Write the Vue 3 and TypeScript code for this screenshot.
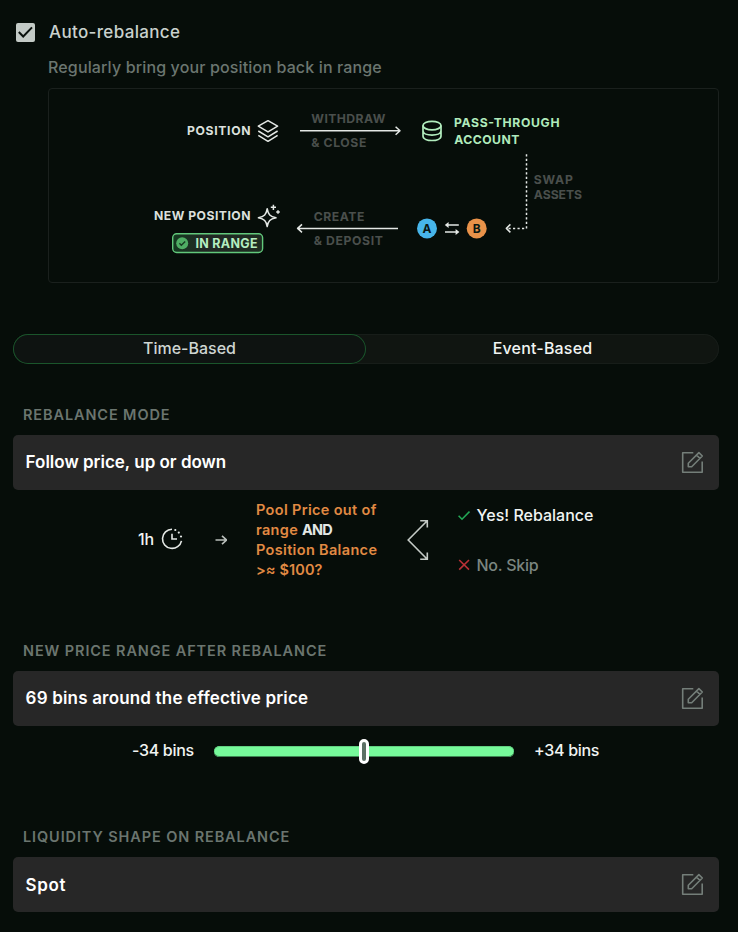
<script setup lang="ts">
import { ref } from 'vue'

type Mode = 'time' | 'event'

const enabled = ref(true)
const mode = ref<Mode>('time')
const tabs: { id: Mode; label: string }[] = [
  { id: 'time', label: 'Time-Based' },
  { id: 'event', label: 'Event-Based' },
]
</script>

<template>
  <main class="panel">
    <header class="head">
      <button class="checkbox" role="checkbox" :aria-checked="enabled" @click="enabled = !enabled">
        <svg v-if="enabled" viewBox="0 0 19 19" width="19" height="19">
          <path d="M2.8 9 7.2 13.5 16 4.4" fill="none" stroke="#0a110d" stroke-width="2" />
        </svg>
      </button>
      <h1 class="title">Auto-rebalance</h1>
    </header>
    <p class="subtitle">Regularly bring your position back in range</p>

    <section class="diagram">
      <svg viewBox="49 89 669 193" width="669" height="193">
        <defs>
          <linearGradient id="badge" x1="0" x2="1" y1="0" y2="0">
            <stop offset="0" stop-color="#143a20" />
            <stop offset="0.35" stop-color="#222724" />
            <stop offset="1" stop-color="#1d2c21" />
          </linearGradient>
        </defs>

        <g class="caps light">
          <text x="187" y="135.1" textLength="63.5">POSITION</text>
          <text x="154" y="220.3" textLength="96.5">NEW POSITION</text>
        </g>
        <g class="caps mint">
          <text x="454" y="126.6" textLength="105.5">PASS-THROUGH</text>
          <text x="454.3" y="144" textLength="65">ACCOUNT</text>
        </g>
        <g class="caps dim">
          <text x="311.3" y="123.3" textLength="74">WITHDRAW</text>
          <text x="311.3" y="147.3" textLength="55">&amp; CLOSE</text>
          <text x="313.8" y="221" textLength="50.5">CREATE</text>
          <text x="313.8" y="244.5" textLength="69">&amp; DEPOSIT</text>
          <text x="533.8" y="184.2" textLength="39">SWAP</text>
          <text x="533.8" y="199" textLength="48.3">ASSETS</text>
        </g>

        <g class="line">
          <!-- stacked layers -->
          <path d="M268 120.7 277.6 126.2 268 131.9 258.3 126.2Z" />
          <path d="M258.3 131 268 136.8 277.6 131M258.3 135.4 268 141.3 277.6 135.4" />
          <!-- sparkles -->
          <path d="M267.2 208.7C268.2 214.6 270 216.6 276 217.8 270 219 268.2 221 267.2 226.6 266.2 221 264.4 219 258.4 217.8 264.4 216.6 266.2 214.6 267.2 208.7Z" />
          <path d="M273.4 204.7V209.9M270.8 207.3H276M278 210.2V213.8M276.2 212H279.8" />
          <!-- flow arrows -->
          <path d="M300 130.7H400M395.6 126.7 400 130.7 395.6 134.7" />
          <path d="M398 228.4H297.6M302 224.4 297.6 228.4 302 232.4" />
          <path d="M510.4 224.4 506.4 228.4 510.4 232.4" />
          <path d="M526.5 154.2V228.4H508" stroke-dasharray="2.2 2.3" />
          <!-- swap -->
          <path d="M446 225H458.8M445 232H458" />
        </g>
        <path d="M444.8 225 448.6 222V228ZM459.4 232 455.6 229V235Z" fill="#e4e8e5" />

        <g class="line mint-line">
          <ellipse cx="432" cy="125.6" rx="9" ry="4.3" />
          <path d="M423 125.6V136C423 142 441 142 441 136V125.6M423 130.8C423 136.6 441 136.6 441 130.8" />
        </g>

        <rect x="172.7" y="233.7" width="89.9" height="18.8" rx="4" fill="url(#badge)" stroke="#62c87b" stroke-width="1.4" />
        <circle cx="182.2" cy="243.2" r="6" fill="#4fae64" />
        <path d="M179.4 243.3 181.3 245.2 185.2 241.4" fill="none" stroke="#163c21" stroke-width="1.4" />
        <text class="range" x="195.5" y="247.7" textLength="62">IN RANGE</text>

        <circle cx="427" cy="228.4" r="10" fill="#47b5ea" />
        <circle cx="476.7" cy="228.4" r="10" fill="#e99249" />
        <text class="token" x="427" y="232.8">A</text>
        <text class="token" x="476.7" y="232.8">B</text>
      </svg>
    </section>

    <nav class="tabs">
      <button
        v-for="t in tabs"
        :key="t.id"
        class="tab"
        :class="[t.id, { active: mode === t.id }]"
        @click="mode = t.id"
      >{{ t.label }}</button>
    </nav>

    <section class="group mode">
      <h2 class="label">REBALANCE MODE</h2>
      <div class="field">
        <span>Follow price, up or down</span>
        <svg class="edit" viewBox="0 0 24 24" width="24" height="24">
          <path d="M13.3 2.8H2.7V22.3H22.2V11.5" /><path d="M8.3 13.2 18.9 2.6 22.3 6 11.7 16.7H8.3ZM16.5 5 19.9 8.4" />
        </svg>
      </div>
      <div class="flow">
        <div class="interval">
          <span>1h</span>
          <svg viewBox="0 0 22 22" width="22" height="22">
            <path d="M11 1.2A9.6 9.6 0 1 0 20.5 12.8M11 5.8V11H16" />
            <g class="dots">
              <circle cx="14.3" cy="2" r="1.1" /><circle cx="17.8" cy="4.6" r="1.1" /><circle cx="20" cy="8.5" r="1.1" />
            </g>
          </svg>
        </div>
        <svg class="step" viewBox="0 0 12 10" width="12" height="10"><path d="M.5 5H11.5M7 .8 11.5 5 7 9.2" /></svg>
        <p class="condition">
          <span>Pool Price out of</span>
          <span>range <b>AND</b></span>
          <span>Position Balance</span>
          <span class="amount">&gt;≈ $100?</span>
        </p>
        <svg class="fork" viewBox="0 0 22 42" width="22" height="42">
          <path d="M20 2 1.2 21 20 40M13.2 1.7H20.3V8.5M13.2 40.3H20.3V33.5" />
        </svg>
        <div class="outcomes">
          <div class="outcome">
            <svg viewBox="0 0 12 12" width="12" height="12"><path d="M.6 6.8 4 10.2 11.5 2.5" stroke="#23a856" /></svg>
            <span>Yes! Rebalance</span>
          </div>
          <div class="outcome no">
            <svg viewBox="0 0 12 12" width="12" height="12"><path d="M1.2 1 11 10.6M11 1 1.2 10.6" stroke="#b93036" /></svg>
            <span>No. Skip</span>
          </div>
        </div>
      </div>
    </section>

    <section class="group price">
      <h2 class="label">NEW PRICE RANGE AFTER REBALANCE</h2>
      <div class="field wide">
        <span>69 bins around the effective price</span>
        <svg class="edit" viewBox="0 0 24 24" width="24" height="24">
          <path d="M13.3 2.8H2.7V22.3H22.2V11.5" /><path d="M8.3 13.2 18.9 2.6 22.3 6 11.7 16.7H8.3ZM16.5 5 19.9 8.4" />
        </svg>
      </div>
      <div class="slider">
        <span class="low">-34 bins</span>
        <div class="track"><i class="thumb"></i></div>
        <span>+34 bins</span>
      </div>
    </section>

    <section class="group">
      <h2 class="label">LIQUIDITY SHAPE ON REBALANCE</h2>
      <div class="field spot">
        <span>Spot</span>
        <svg class="edit" viewBox="0 0 24 24" width="24" height="24">
          <path d="M13.3 2.8H2.7V22.3H22.2V11.5" /><path d="M8.3 13.2 18.9 2.6 22.3 6 11.7 16.7H8.3ZM16.5 5 19.9 8.4" />
        </svg>
      </div>
    </section>
  </main>
</template>

<style>
body {
  background: #060d09;
}
</style>

<style scoped>
.panel {
  box-sizing: border-box;
  height: 932px;
  padding: 20px 19px 0 13px;
  background: #060d09;
  color: #f1f4f2;
  font: 500 16px/20px Inter, sans-serif;
}
h1, h2, p { margin: 0; }
button { border: 0; padding: 0; font: inherit; color: inherit; }
svg { display: block; flex: none; }
.head {
  display: flex;
  align-items: center;
  height: 24px;
  gap: 14px;
  padding-left: 3px;
}
.checkbox {
  width: 19px;
  height: 19px;
  margin-top: 1px;
  border-radius: 2px;
  background: #c3cac6;
}
.title {
  font-size: 17px;
  font-weight: 550;
  letter-spacing: 0.34px;
  color: #c9d1cd;
}
.subtitle {
  margin: 13px 0 0 35px;
  height: 31px;
  line-height: 20px;
  letter-spacing: 0.14px;
  color: #6b7670;
}
.diagram {
  box-sizing: border-box;
  height: 195px;
  margin-left: 35px;
  border: 1px solid #1a201d;
  border-radius: 4px;
}
.caps { font-size: 12.2px; font-weight: 650; }
.light { fill: #dce0dd; }
.mint { fill: #b0eabc; }
.dim { fill: #4a4f4c; }
.range { font-size: 12.5px; font-weight: 650; fill: #b5edc0; }
.token { font-size: 12px; font-weight: 700; fill: #0b1713; text-anchor: middle; }
.line { fill: none; stroke: #e4e8e5; stroke-width: 1.5; stroke-linejoin: round; }
.mint-line { stroke: #b2edbe; stroke-width: 1.7; }

.tabs {
  display: grid;
  grid-template-columns: 353px 353px;
  box-sizing: border-box;
  height: 30px;
  margin-top: 51px;
  border-radius: 15px;
  background: #101511;
  box-shadow: inset 0 0 0 1px #171d19;
}
.tab {
  height: 30px;
  padding-bottom: 2px;
  border-radius: 15px;
  background: none;
}
.tab.event { letter-spacing: 0.19px; }
.tab.active {
  background: #0e1311;
  box-shadow: inset 0 0 0 1px #1a552b;
  color: #cfd6d2;
}

.mode { height: 236px; margin-top: 41px; }
.price { height: 186px; }
.label {
  height: 30px;
  padding-left: 10px;
  font-size: 14.5px;
  line-height: 20px;
  font-weight: 600;
  letter-spacing: 0.89px;
  color: #6b756f;
}
.field {
  display: flex;
  align-items: center;
  justify-content: space-between;
  box-sizing: border-box;
  height: 55px;
  padding: 0 15px 1px 12.6px;
  border-radius: 5px;
  background: #272727;
  color: #fff;
  font-size: 17px;
  font-weight: 600;
}
.wide { letter-spacing: 0.18px; }
.spot { padding-bottom: 0; letter-spacing: 0.6px; }
.spot .edit { margin-top: -1px; }
.edit { fill: none; stroke: #747e79; stroke-width: 1.6; stroke-linejoin: round; }

.flow {
  display: grid;
  grid-template-columns: 77px 41px 151px 50.5px auto;
  align-items: center;
  height: 100px;
  padding-left: 125px;
}
.flow svg { fill: none; stroke: #e4e8e5; stroke-width: 1.6; }
.flow .step { stroke: #b9bfbb; }
.flow .fork { stroke: #c4cac6; }
.flow .dots { fill: #e4e8e5; stroke: none; }
.interval { display: flex; align-items: center; gap: 7.5px; padding-bottom: 2px; letter-spacing: -0.2px; }
.condition {
  display: flex;
  flex-direction: column;
  color: #e18a43;
  font-size: 14.5px;
  font-weight: 600;
  letter-spacing: 0.33px;
}
.condition b { color: #e3e7e4; font-weight: 700; letter-spacing: -0.9px; }
.amount { letter-spacing: 0.1px; }
.outcomes { display: flex; flex-direction: column; gap: 30px; }
.outcome { display: flex; align-items: center; gap: 7px; white-space: nowrap; }
.no { color: #7b8580; letter-spacing: -0.25px; }

.slider {
  display: flex;
  align-items: center;
  height: 50px;
  padding-left: 119px;
  gap: 20px;
  letter-spacing: -0.3px;
}
.slider span { margin-top: -2px; }
.low { width: 62px; white-space: nowrap; }
.track {
  display: flex;
  align-items: center;
  justify-content: center;
  width: 300px;
  height: 11px;
  border-radius: 5.5px;
  background: #76f99a;
  box-shadow: inset 0 -1px #3d8552, inset 0 1px #62d081;
}
.thumb {
  box-sizing: border-box;
  width: 10px;
  height: 25px;
  border: 3px solid #fff;
  border-radius: 5px;
  background: #5d7166;
}
</style>
